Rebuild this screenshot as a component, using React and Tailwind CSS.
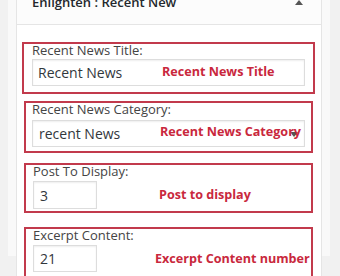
import React from "react";

function Note({ children, className = "" }) {
  return (
    <span className={"text-[12.6px] font-bold text-[#c9283d] leading-4 whitespace-nowrap " + className}>
      {children}
    </span>
  );
}

function Field({ value, className = "" }) {
  return (
    <div
      className={
        "h-[27px] shrink-0 border border-[#dddddd] bg-white shadow-[inset_0_1px_2px_rgba(0,0,0,0.07)] flex items-center pl-[5px] text-[14px] text-[#32373c] " +
        className
      }
    >
      {value}
    </div>
  );
}

export default function App() {
  return (
    <div className="w-[340px] h-[276px] overflow-hidden bg-[#f1f1f1] pl-2 pr-[10px] font-['Open_Sans',sans-serif]">
      <div className="h-full bg-[#f9f9f9] px-2">
        <div className="-mt-5 bg-white border border-[#e5e5e5] h-[400px]">
          {/* widget header */}
          <div className="h-[44px] flex justify-between items-start pt-[13px] pl-[15px] pr-[18px] border-b border-[#e5e5e5] bg-[#fcfcfc]">
            <h3 className="text-[13px] font-semibold leading-4 text-[#23282d]">Enlighten : Recent New</h3>
            <span className="mt-[6px] w-0 h-0 border-x-[4px] border-x-transparent border-b-[5px] border-b-[#555]" />
          </div>

          <div className="pt-[17px] pl-[5px] pr-[6px]">
            {/* title */}
            <div className="border-2 border-[#c23a4c] pl-2 pr-2 pb-[6px]">
              <label className="block text-[13px] leading-[13px] text-[#444]">Recent News Title:</label>
              <div className="relative mt-[2px]">
                <Field value="Recent News" />
                <Note className="absolute left-[130px] top-[5px]">Recent News Title</Note>
              </div>
            </div>

            {/* category */}
            <div className="mt-[7px] mx-[2px] border-2 border-[#c23a4c] px-[6px] pb-[4px]">
              <label className="block text-[13px] leading-[13px] text-[#444]">Recent News Category:</label>
              <div className="relative mt-[4px]">
                <Field value="recent News" className="pl-[6px]" />
                <span className="absolute right-[7px] top-[12px] w-0 h-0 border-x-[4px] border-x-transparent border-t-[5px] border-t-[#555]" />
                <Note className="absolute left-[128px] top-[4px]">Recent News Category</Note>
              </div>
            </div>

            {/* post count */}
            <div className="mt-[10px] mx-[2px] border-2 border-[#c23a4c] pl-[7px] pb-[2px]">
              <label className="block text-[13px] leading-[13px] text-[#444]">Post To Display:</label>
              <div className="flex items-center mt-[3px]">
                <Field value="3" className="w-[64px] h-[28px] pl-[6px]" />
                <Note className="ml-[62px]">Post to display</Note>
              </div>
            </div>

            {/* excerpt */}
            <div className="mt-[14px] mx-[2px] border-2 border-[#c23a4c] pl-[7px] pb-[8px]">
              <label className="block text-[13px] leading-[13px] text-[#444]">Excerpt Content:</label>
              <div className="flex items-center mt-[3px]">
                <Field value="21" className="w-[64px] pl-[6px]" />
                <Note className="ml-[58px]">Excerpt Content number</Note>
              </div>
            </div>
          </div>
        </div>
      </div>
    </div>
  );
}
